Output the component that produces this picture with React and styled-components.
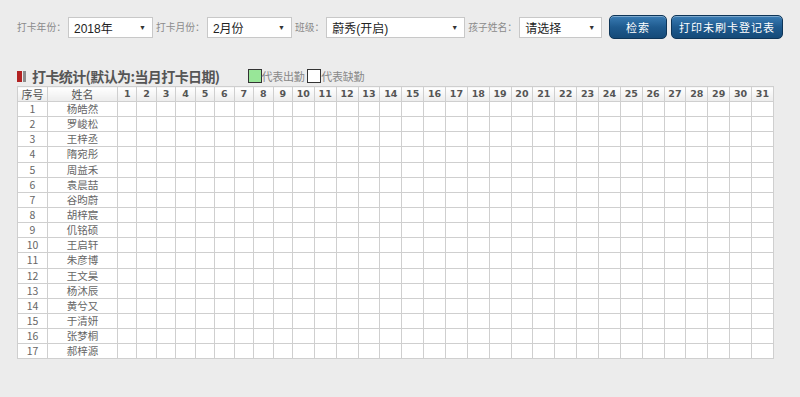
import React from 'react';
import styled, { createGlobalStyle } from 'styled-components';

const GlobalStyle = createGlobalStyle`
  body {
    margin: 0;
    background: #ececec;
    font-family: "Liberation Sans", "Noto Sans CJK SC", sans-serif;
  }
`;

const names = [
  '杨皓然', '罗峻松', '王梓丞', '隋宛彤', '周益禾', '袁晨喆', '谷昀蔚', '胡梓宸', '仉铭硕',
  '王启轩', '朱彦博', '王文昊', '杨沐辰', '黄兮又', '于清妍', '张梦桐', '郝梓源',
];

const days = Array.from({ length: 31 }, (_, i) => i + 1);

const Page = styled.div`
  padding: 15px 17px 0 17px;
  width: 800px;
  height: 397px;
  box-sizing: border-box;
`;

const Toolbar = styled.div`
  display: flex;
  align-items: center;
  height: 24px;
`;

const Label = styled.span`
  font-family: "Noto Sans CJK SC", sans-serif;
  font-size: 9.8px;
  color: #8a8a8a;
  margin-right: 2px;
  white-space: nowrap;
`;

const Select = styled.div`
  display: flex;
  align-items: center;
  justify-content: space-between;
  box-sizing: border-box;
  width: ${(p) => p.w}px;
  height: 21px;
  padding: 0 6px 0 5px;
  margin-right: 3px;
  background: #fff;
  border: 1px solid #c8c8c8;
  font-family: "Liberation Sans", "Noto Sans CJK SC", sans-serif;
  font-size: 12px;
  color: #222;
`;

const Arrow = styled.span`
  font-size: 7px;
  color: #333;
`;

const Button = styled.button`
  box-sizing: border-box;
  height: 24px;
  width: ${(p) => p.w}px;
  margin-left: 4px;
  padding: 0;
  border: 1px solid #0e3558;
  border-radius: 5px;
  background: linear-gradient(#3a7cb4, #1f5b8f 50%, #154a78);
  box-shadow: inset 0 1px 0 rgba(255, 255, 255, 0.35);
  color: #fff;
  font-family: "Noto Sans CJK SC", sans-serif;
  font-size: 11px;
  letter-spacing: 1px;
`;

const TitleRow = styled.div`
  display: flex;
  align-items: center;
  margin-top: 27px;
  height: 20px;
`;

const Mark = styled.span`
  display: inline-block;
  width: ${(p) => p.w}px;
  height: 11px;
  background: ${(p) => p.color};
  margin-right: ${(p) => p.gap}px;
`;

const Title = styled.span`
  font-family: "Noto Sans CJK SC", sans-serif;
  font-weight: bold;
  font-size: 14px;
  color: #555;
  margin-left: 6px;
  margin-right: 28px;
  letter-spacing: -0.6px;
`;

const LegendBox = styled.span`
  display: inline-block;
  box-sizing: border-box;
  width: 14px;
  height: 14px;
  border: 1px solid #333;
  background: ${(p) => p.fill};
`;

const LegendText = styled.span`
  font-family: "Noto Sans CJK SC", sans-serif;
  font-size: 11px;
  color: #888;
  margin-right: 3px;
  letter-spacing: -0.3px;
`;

const Table = styled.table`
  margin-top: 0;
  width: 756px;
  border-collapse: collapse;
  table-layout: fixed;
  background: #fff;
`;

const Th = styled.th`
  height: 14px;
  padding: 0;
  border: 1px solid #cfcfcf;
  background: linear-gradient(#ffffff, #ececec);
  font-family: ${(p) => (p.cjk ? '"Noto Sans CJK SC"' : '"DejaVu Sans"')}, sans-serif;
  font-weight: ${(p) => (p.cjk ? 'normal' : 'bold')};
  font-size: ${(p) => (p.cjk ? '11px' : '9.5px')};
  color: #555;
  text-align: center;
  line-height: 14px;
`;

const Td = styled.td`
  height: 14.15px;
  padding: 0;
  border: 1px solid #cfcfcf;
  font-family: "Noto Sans CJK SC", sans-serif;
  font-size: 10.5px;
  color: #666;
  text-align: center;
  line-height: 14px;
`;

export default function App() {
  return (
    <>
      <GlobalStyle />
      <Page>
        <Toolbar>
          <Label>打卡年份：</Label>
          <Select w={85}>
            <span>2018年</span>
            <Arrow>▼</Arrow>
          </Select>
          <Label>打卡月份：</Label>
          <Select w={85}>
            <span>2月份</span>
            <Arrow>▼</Arrow>
          </Select>
          <Label>班级：</Label>
          <Select w={139}>
            <span>蔚秀(开启)</span>
            <Arrow>▼</Arrow>
          </Select>
          <Label>孩子姓名：</Label>
          <Select w={83}>
            <span>请选择</span>
            <Arrow>▼</Arrow>
          </Select>
          <Button w={58}>检索</Button>
          <Button w={112}>打印未刷卡登记表</Button>
        </Toolbar>

        <TitleRow>
          <Mark color="#b22222" w={5} gap={1} />
          <Mark color="#8c8c8c" w={3} gap={0} />
          <Title>打卡统计(默认为:当月打卡日期)</Title>
          <LegendBox fill="#98e698" />
          <LegendText>代表出勤</LegendText>
          <LegendBox fill="#fff" />
          <LegendText>代表缺勤</LegendText>
        </TitleRow>

        <Table>
          <colgroup>
            <col style={{ width: 30 }} />
            <col style={{ width: 70 }} />
            {days.map((d) => (
              <col key={d} style={{ width: d < 10 ? 19.44 : 21.86 }} />
            ))}
          </colgroup>
          <thead>
            <tr>
              <Th cjk>序号</Th>
              <Th cjk>姓名</Th>
              {days.map((d) => (
                <Th key={d}>{d}</Th>
              ))}
            </tr>
          </thead>
          <tbody>
            {names.map((n, i) => (
              <tr key={n}>
                <Td>{i + 1}</Td>
                <Td>{n}</Td>
                {days.map((d) => (
                  <Td key={d} />
                ))}
              </tr>
            ))}
          </tbody>
        </Table>
      </Page>
    </>
  );
}
